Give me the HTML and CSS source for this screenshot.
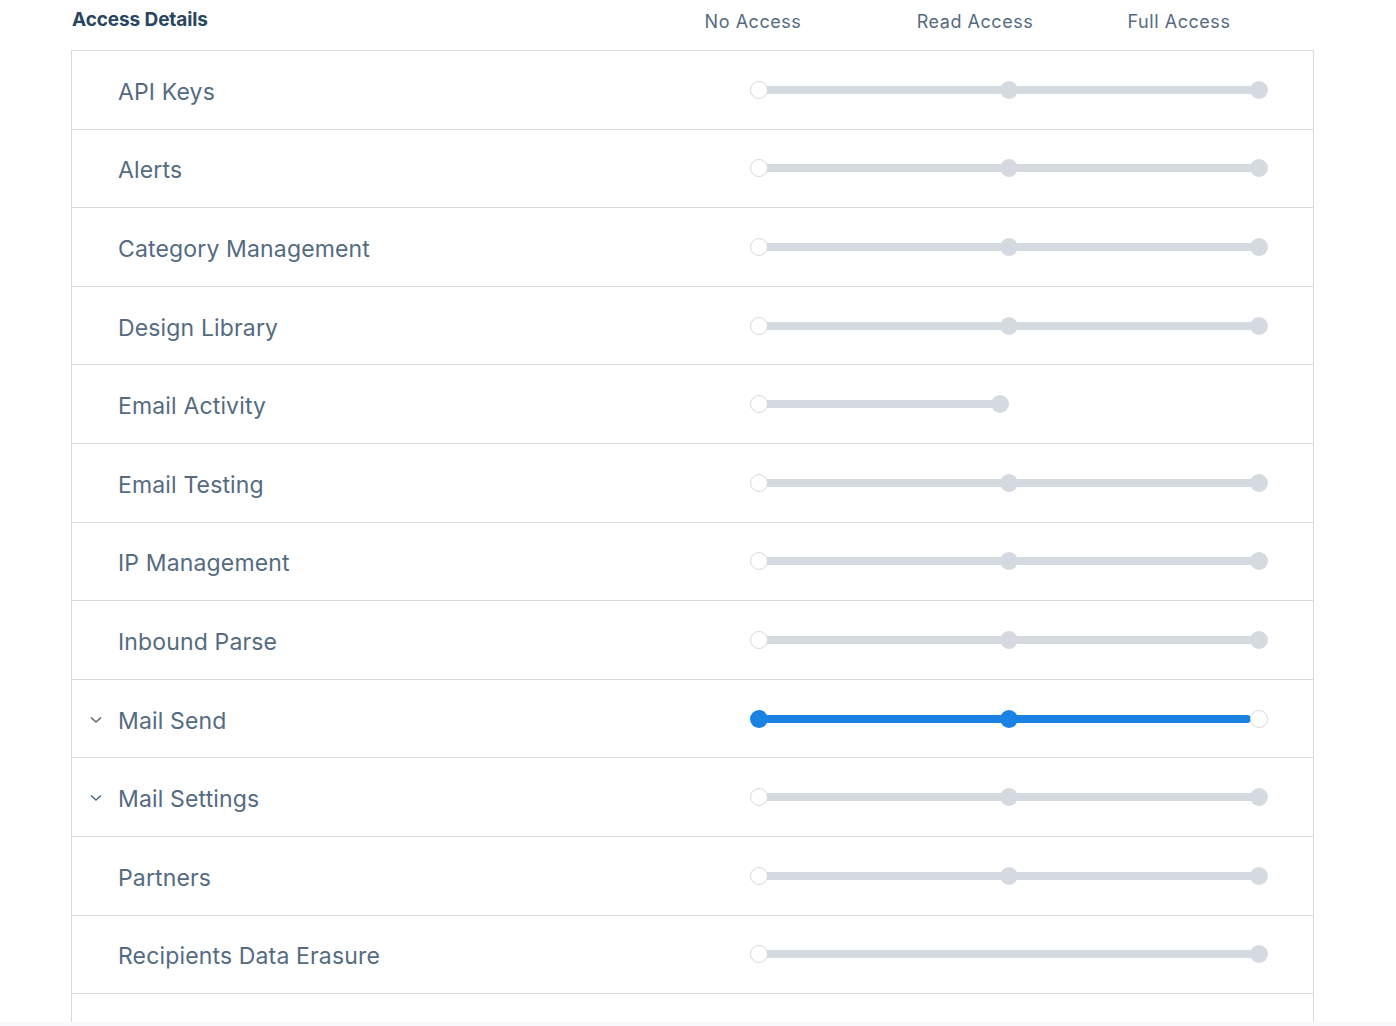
FILE: index.html
```html
<!DOCTYPE html>
<html>
<head>
<meta charset="utf-8">
<link rel="stylesheet" href="styles.css">
</head>
<body>
<div class="page">
  <div class="head">
    <div class="title">Access Details</div>
    <div class="col col-a">No Access</div>
    <div class="col col-b">Read Access</div>
    <div class="col col-c">Full Access</div>
  </div>
  <div class="table">
    <div class="row"><div class="label">API Keys</div>
      <div class="slider"><div class="track"></div><span class="h h0 off"></span><span class="h h1"></span><span class="h h2"></span></div></div>
    <div class="row"><div class="label">Alerts</div>
      <div class="slider"><div class="track"></div><span class="h h0 off"></span><span class="h h1"></span><span class="h h2"></span></div></div>
    <div class="row"><div class="label">Category Management</div>
      <div class="slider"><div class="track"></div><span class="h h0 off"></span><span class="h h1"></span><span class="h h2"></span></div></div>
    <div class="row"><div class="label">Design Library</div>
      <div class="slider"><div class="track"></div><span class="h h0 off"></span><span class="h h1"></span><span class="h h2"></span></div></div>
    <div class="row"><div class="label">Email Activity</div>
      <div class="slider"><div class="track short"></div><span class="h h0 off"></span><span class="h hs"></span></div></div>
    <div class="row"><div class="label">Email Testing</div>
      <div class="slider"><div class="track"></div><span class="h h0 off"></span><span class="h h1"></span><span class="h h2"></span></div></div>
    <div class="row"><div class="label">IP Management</div>
      <div class="slider"><div class="track"></div><span class="h h0 off"></span><span class="h h1"></span><span class="h h2"></span></div></div>
    <div class="row"><div class="label">Inbound Parse</div>
      <div class="slider"><div class="track"></div><span class="h h0 off"></span><span class="h h1"></span><span class="h h2"></span></div></div>
    <div class="row"><div class="label"><svg class="chev" width="12" height="8" viewBox="0 0 12 8"><path d="M1 1.5 L6 6 L11 1.5" fill="none" stroke="#546b81" stroke-width="1.6"/></svg>Mail Send</div>
      <div class="slider blue"><div class="track"></div><span class="h h0"></span><span class="h h1"></span><span class="h h2 off"></span></div></div>
    <div class="row"><div class="label"><svg class="chev" width="12" height="8" viewBox="0 0 12 8"><path d="M1 1.5 L6 6 L11 1.5" fill="none" stroke="#546b81" stroke-width="1.6"/></svg>Mail Settings</div>
      <div class="slider"><div class="track"></div><span class="h h0 off"></span><span class="h h1"></span><span class="h h2"></span></div></div>
    <div class="row"><div class="label">Partners</div>
      <div class="slider"><div class="track"></div><span class="h h0 off"></span><span class="h h1"></span><span class="h h2"></span></div></div>
    <div class="row"><div class="label">Recipients Data Erasure</div>
      <div class="slider"><div class="track"></div><span class="h h0 off"></span><span class="h h2"></span></div></div>
    <div class="row"><div class="label"></div></div>
  </div>
</div>
</body>
</html>
```
FILE: styles.css
```css
html, body {
  margin: 0;
  padding: 0;
  background: #f8f9fa;
  overflow: hidden;
}
.page {
  height: 1022px;
  overflow: hidden;
  background: #ffffff;
  font-family: Inter, "Noto Sans", sans-serif;
  color: #546b81;
}
.head {
  display: grid;
  grid-template-columns: 606px 150px 294px 114px;
  height: 50px;
  margin-left: 72px;
}
.title {
  font-size: 19px;
  font-weight: 700;
  letter-spacing: -0.1px;
  color: #294661;
  padding-top: 8px;
  line-height: 24px;
}
.col {
  text-align: center;
  font-size: 18px;
  letter-spacing: 0.55px;
  line-height: 24px;
  padding-top: 10px;
  color: #546b81;
}
.table {
  margin-left: 71px;
  width: 1243px;
  box-sizing: border-box;
  border: 1px solid #d4dadf;
  border-bottom: none;
}
.row {
  display: flex;
  align-items: center;
  height: 78.6px;
  box-sizing: border-box;
  border-bottom: 1px solid #d4dadf;
}
.label {
  position: relative;
  width: 678px;
  padding-left: 46px;
  padding-top: 4px;
  box-sizing: border-box;
  font-size: 23px;
  letter-spacing: 0.15px;
  line-height: 30px;
  color: #546b81;
}
.chev {
  position: absolute;
  left: 18px;
  top: 14px;
}
.slider {
  position: relative;
  width: 518px;
  height: 18px;
}
.track {
  position: absolute;
  left: 9px;
  top: 5px;
  width: 500px;
  height: 8px;
  border-radius: 4px;
  background: #d5dae0;
}
.track.short {
  width: 241px;
}
.h {
  position: absolute;
  top: 0;
  width: 18px;
  height: 18px;
  box-sizing: border-box;
  border-radius: 50%;
  background: #d5dae0;
}
.h0 { left: 0; }
.h1 { left: 250px; }
.h2 { left: 500px; }
.hs { left: 241px; }
.h.off {
  background: #ffffff;
  border: 1px solid #d4dadf;
}
.blue .track {
  background: #1a82e2;
  width: 492px;
}
.blue .h {
  background: #1a82e2;
}
.blue .h.off {
  background: #ffffff;
}
```
